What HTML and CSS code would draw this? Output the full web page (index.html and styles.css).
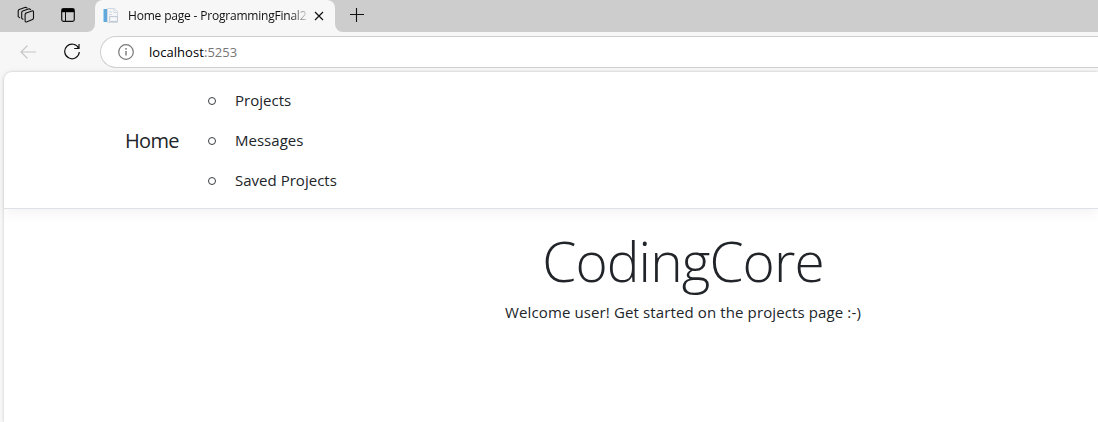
FILE: index.html
```html
<!DOCTYPE html>
<html lang="en">
<head>
<meta charset="utf-8">
<title>Home page</title>
<link rel="stylesheet" href="styles.css">
</head>
<body>
<div class="tabstrip">
  <div class="tools">
    <svg class="workspaces" width="18" height="18" viewBox="0 0 18 18" fill="none" stroke="#111" stroke-width="1.1" stroke-linejoin="round" stroke-linecap="round">
      <path d="M8.500 7.300 15 5c1-.3 1.500 0 1.500 1v6c0 .8-.3 1.200-1 1.500l-5.500 2.300c-1.200.4-1.900 0-1.900-1.100V8.800c0-.8.300-1.200 1-1.500"/>
      <path d="M6 13.200 4.700 12.400V6.600c0-.8.300-1.200 1-1.500l6.500-2.300 1.400.8"/>
      <path d="M2.600 11.600 1.200 10.600V5c0-.8.300-1.200 1-1.500l6.300-2.300 1.600.8"/>
    </svg>
    <svg class="tabmenu" width="14" height="14" viewBox="0 0 14 14" fill="none" stroke="#111" stroke-width="1.2">
      <rect x=".7" y=".7" width="12.600" height="12.600" rx="1.800"/>
      <path d="M1 1h12v3.200H1z" fill="#000" stroke="none"/>
      <path d="M4.500 4v9" stroke-width="1"/>
    </svg>
  </div>
  <div class="tab">
    <svg class="favicon" width="16" height="16" viewBox="0 0 16 16">
      <path d="M4.500.500h7l3 3v11h-10z" fill="#f3f5f8" stroke="#d3d9e0"/>
      <path d="M0 1h4v13H0z" fill="#61a9dc"/>
      <path d="M0 1h1v13H0z" fill="#a9d5f0"/>
      <path d="M11 .500v4h4M6 4h3M6 6.500h3" fill="none" stroke="#d3d9e0"/>
      <path d="M6.500 8.500h8v5h-8z" fill="#edf0f4" stroke="#c3cbd4"/>
      <path d="M8 11h5" stroke="#fff"/>
    </svg>
    <span class="tab-title">Home page - ProgrammingFinal20</span>
    <svg class="close" width="10" height="10" viewBox="0 0 10 10" stroke="#111" stroke-width="1.200"><path d="M1 1l8 8M9 1 1 9"/></svg>
  </div>
  <div class="strip-rest">
    <svg class="newtab" width="14" height="14" viewBox="0 0 14 14" stroke="#111" stroke-width="1.100"><path d="M0 6.500h14M6.500 0v14"/></svg>
  </div>
</div>
<div class="toolbar">
  <svg class="back" width="16" height="14" viewBox="0 0 16 14" fill="none" stroke="#c5c5c5" stroke-width="1.100"><path d="M16 7H1M7.500.500 1 7l6.500 6.500"/></svg>
  <svg class="reload" width="18" height="18" viewBox="0 0 18 18" fill="none" stroke="#111" stroke-width="1.200"><path d="M15.700 5.500A7.300 7.300 0 1 0 16.300 9M16 1V5.500h-4.800"/></svg>
  <div class="address">
    <svg class="info" width="16" height="16" viewBox="0 0 16 16" fill="none" stroke="#767676" stroke-width="1.200"><circle cx="8" cy="8" r="7.300"/><path d="M8 7v4.500" stroke-width="1.400"/><circle cx="8" cy="4.800" r=".9" fill="#767676" stroke="none"/></svg>
    <span class="url">localhost<span class="port">:5253</span></span>
  </div>
</div>
<div class="page">
  <header class="navbar">
    <a class="brand">Home</a>
    <ul class="links">
      <li><a>Projects</a></li>
      <li><a>Messages</a></li>
      <li><a>Saved Projects</a></li>
    </ul>
  </header>
  <main class="main">
    <h1 class="title">CodingCore</h1>
    <p class="welcome">Welcome user! Get started on the projects page :-)</p>
  </main>
</div>
</body>
</html>
```
FILE: styles.css
```css
*, *::before { box-sizing: border-box; }
body {
  margin: 0;
  height: 422px;
  overflow: hidden;
  background: #f7f7f7;
  color: #212529;
  font-family: "Segoe UI", "Open Sans", "Noto Sans", sans-serif;
}
svg { display: block; flex: none; }
.tabstrip { display: flex; height: 32px; background: #f7f7f7; }
.tools {
  display: flex;
  align-items: center;
  width: 95px;
  padding: 0 0 2px 17px;
  background: #cdcdcd;
  border-bottom-right-radius: 8px;
}
.tabmenu { margin-left: 26px; }
.tab {
  display: flex;
  align-items: center;
  width: 240px;
  padding: 0 10px 1px 8px;
  background: #f7f7f7;
  box-shadow: 0 -24px 0 #cdcdcd;
  border-radius: 8px 8px 0 0;
}
.tab-title {
  flex: none;
  width: 179px;
  margin-left: 9px;
  overflow: hidden;
  white-space: nowrap;
  font-size: 12px;
  letter-spacing: -0.22px;
  word-spacing: .2px;
  color: #111;
  -webkit-mask-image: linear-gradient(90deg, #000 162px, transparent 182px);
  mask-image: linear-gradient(90deg, #000 162px, transparent 182px);
}
.close { margin-left: 7px; }
.strip-rest {
  flex: 1;
  padding: 8px 0 0 15px;
  background: #cdcdcd;
  border-bottom-left-radius: 8px;
}
.toolbar { display: flex; align-items: center; height: 40px; padding: 0 0 1px 20px; }
.reload { margin-left: 27px; }
.address {
  display: flex;
  align-items: center;
  flex: 1;
  height: 32px;
  margin: 1px 0 0 19px;
  padding-left: 17px;
  background: #fff;
  border: 1px solid #cfcfcf;
  border-right: 0;
  border-radius: 16px 0 0 16px;
}
.url { margin-left: 15px; font-size: 13px; letter-spacing: .05px; color: #000; }
.port { color: #767676; }
.page {
  height: 350px;
  margin-left: 4px;
  background: #fff;
  border-top-left-radius: 8px;
  box-shadow: 0 0 3px rgba(0, 0, 0, .22);
}
.navbar {
  display: flex;
  align-items: center;
  height: 137px;
  padding-left: 121px;
  border-bottom: 1px solid #dee2e6;
  box-shadow: 0 4px 12px rgba(0, 0, 0, .05);
}
.brand { width: 70px; font-size: 20px; letter-spacing: -.65px; padding-top: 1px; }
.links { margin: 0; padding: 0 0 0 13px; list-style: none; font-size: 15px; letter-spacing: .02px; }
.links li { display: flex; align-items: center; height: 40px; line-height: 40px; }
.links li::before {
  content: "";
  width: 8px;
  height: 8px;
  margin: 1px 19px 0 0;
  border: 1.5px solid #3a3e42;
  border-radius: 50%;
}
.main { padding: 18px 0 0 260px; width: 1098px; text-align: center; }
.title { margin: 0; font-size: 55px; line-height: 67px; font-weight: 300; letter-spacing: -.9px; }
.welcome { margin: 6px 0 0; font-size: 15px; line-height: 24px; letter-spacing: .12px; }
```
